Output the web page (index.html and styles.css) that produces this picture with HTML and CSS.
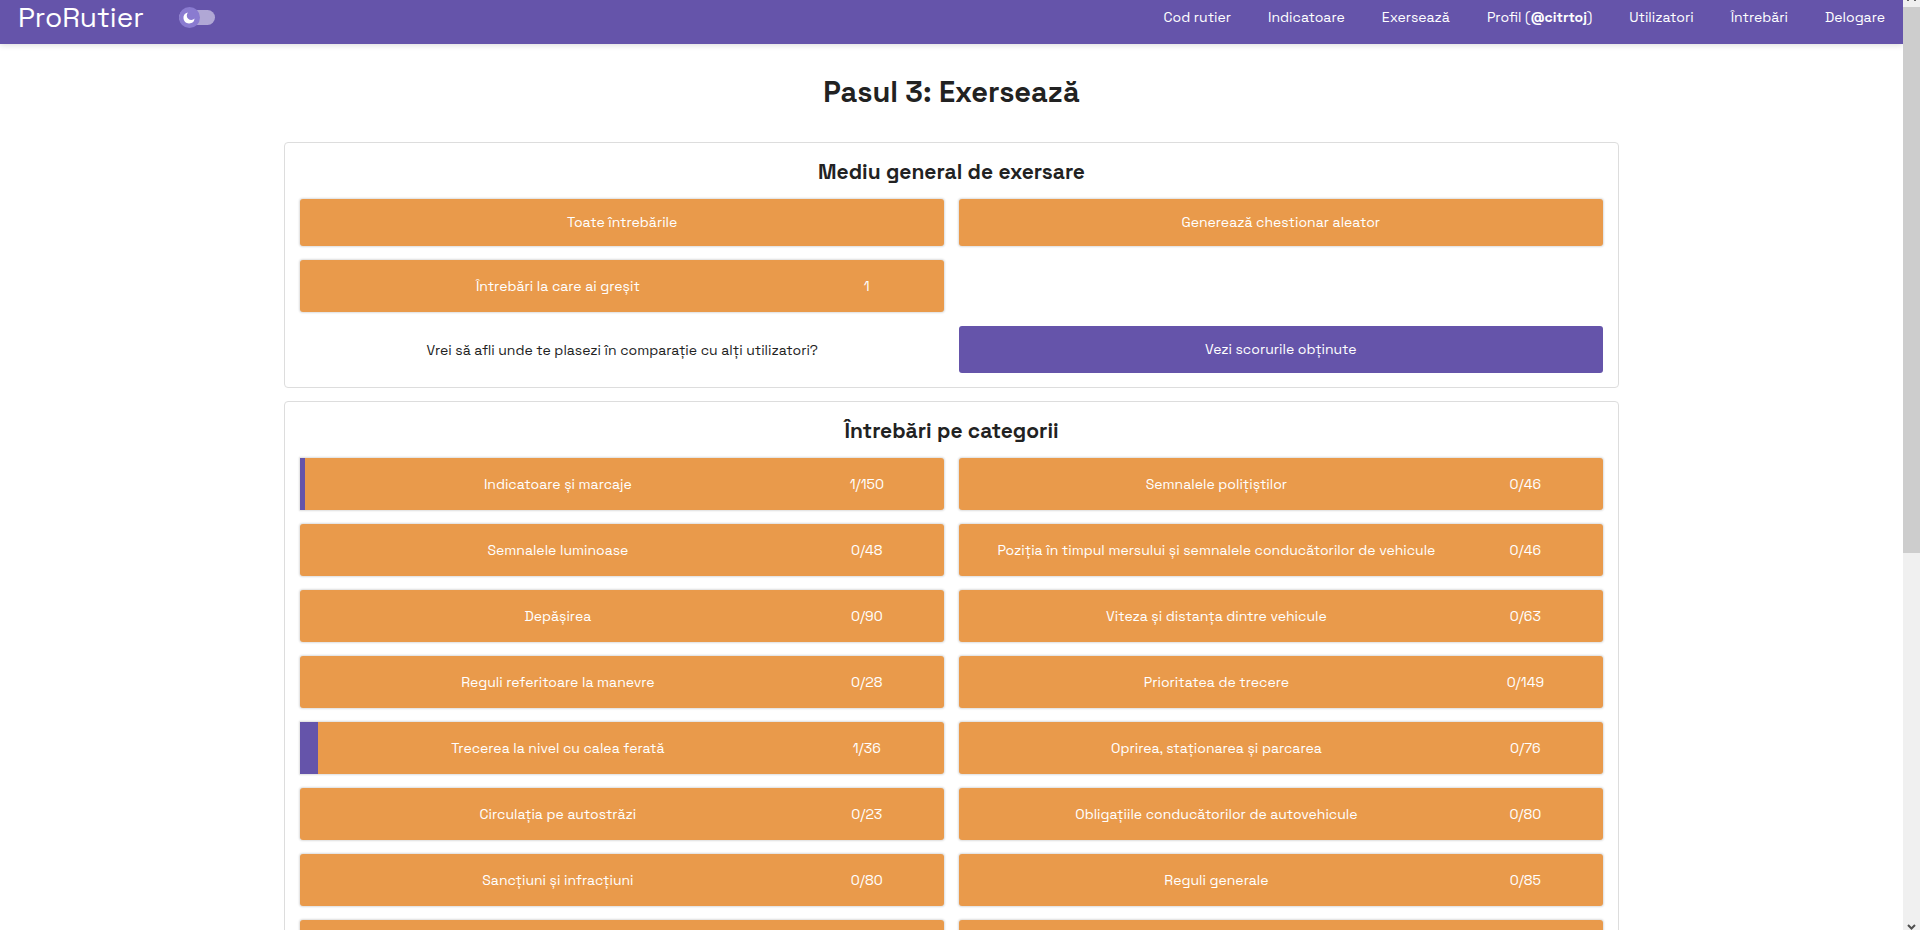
FILE: index.html
```html
<!DOCTYPE html>
<html lang="ro">
<head>
<meta charset="utf-8">
<meta name="viewport" content="width=device-width, initial-scale=1">
<title>ProRutier - Exersează</title>
<link rel="stylesheet" href="styles.css">
</head>
<body>
<div class="window">
  <div class="page">
    <header class="topbar">
      <div class="brand">
        <a class="logo" href="#">ProRutier</a>
        <label class="theme">
          <input class="theme-input" type="checkbox" aria-label="Mod întunecat">
          <span class="theme-knob">
            <svg viewBox="0 0 12 12" width="12" height="12" aria-hidden="true"><path d="M5 0.4A5.6 5.6 0 1 0 11.6 6.6A4 4 0 0 1 5 0.4Z" fill="#fff"/></svg>
          </span>
        </label>
      </div>
      <nav class="nav">
        <a href="#">Cod rutier</a>
        <a href="#">Indicatoare</a>
        <a href="#">Exersează</a>
        <a href="#">Profil (<b>@citrtoj</b>)</a>
        <a href="#">Utilizatori</a>
        <a href="#">Întrebări</a>
        <a href="#">Delogare</a>
      </nav>
    </header>
    <main class="main">
      <h1 class="title">Pasul 3: Exersează</h1>
      <section class="card">
        <h2 class="card-title">Mediu general de exersare</h2>
        <div class="grid">
          <a class="tile" href="#">Toate întrebările</a>
          <a class="tile" href="#">Generează chestionar aleator</a>
          <a class="tile tile-count" href="#"><span>Întrebări la care ai greșit</span><span>1</span></a>
          <p class="hint">Vrei să afli unde te plasezi în comparație cu alți utilizatori?</p>
          <a class="tile tile-accent" href="#">Vezi scorurile obținute</a>
        </div>
      </section>
      <section class="card">
        <h2 class="card-title">Întrebări pe categorii</h2>
        <div class="grid">
          <a class="tile tile-count tile-started" href="#"><i class="progress" style="width:0.67%"></i><span>Indicatoare și marcaje</span><span>1/150</span></a>
          <a class="tile tile-count" href="#"><span>Semnalele polițiștilor</span><span>0/46</span></a>
          <a class="tile tile-count" href="#"><span>Semnalele luminoase</span><span>0/48</span></a>
          <a class="tile tile-count" href="#"><span>Poziția în timpul mersului și semnalele conducătorilor de vehicule</span><span>0/46</span></a>
          <a class="tile tile-count" href="#"><span>Depășirea</span><span>0/90</span></a>
          <a class="tile tile-count" href="#"><span>Viteza și distanța dintre vehicule</span><span>0/63</span></a>
          <a class="tile tile-count" href="#"><span>Reguli referitoare la manevre</span><span>0/28</span></a>
          <a class="tile tile-count" href="#"><span>Prioritatea de trecere</span><span>0/149</span></a>
          <a class="tile tile-count tile-started" href="#"><i class="progress" style="width:2.7%"></i><span>Trecerea la nivel cu calea ferată</span><span>1/36</span></a>
          <a class="tile tile-count" href="#"><span>Oprirea, staționarea și parcarea</span><span>0/76</span></a>
          <a class="tile tile-count" href="#"><span>Circulația pe autostrăzi</span><span>0/23</span></a>
          <a class="tile tile-count" href="#"><span>Obligațiile conducătorilor de autovehicule</span><span>0/80</span></a>
          <a class="tile tile-count" href="#"><span>Sancțiuni și infracțiuni</span><span>0/80</span></a>
          <a class="tile tile-count" href="#"><span>Reguli generale</span><span>0/85</span></a>
          <a class="tile tile-count" href="#"></a>
          <a class="tile tile-count" href="#"></a>
        </div>
      </section>
    </main>
  </div>
  <div class="scrollbar" aria-hidden="true">
    <svg class="arrow" viewBox="0 0 17 7" width="17" height="7"><path d="M4 0V1H6V0M11 0V1H13V0" fill="#606060"/></svg>
    <div class="scroll-thumb"></div>
    <svg class="arrow" viewBox="0 0 17 6" width="17" height="6"><path d="M5 1L8.5 4.5L12 1" fill="none" stroke="#505050" stroke-width="2"/></svg>
  </div>
</div>
</body>
</html>
```
FILE: styles.css
```css
* { box-sizing: border-box; }

body {
  margin: 0;
  background: #fff;
  color: #222;
  font-family: "Space Grotesk", Inter, "Liberation Sans", sans-serif;
  font-size: 14px;
  line-height: 20px;
}

a { color: inherit; text-decoration: none; }

.window { display: flex; height: 100vh; overflow: hidden; }
.page { flex: 1; min-width: 0; }

.topbar {
  display: flex;
  justify-content: space-between;
  align-items: center;
  padding: 0 18px 9px;
  background: #6554aa;
  color: #fff;
  box-shadow: 0 1px 6px rgba(0, 0, 0, 0.15);
}

.brand { display: flex; align-items: center; gap: 35px; }
.logo { font-size: 28px; line-height: 35px; font-weight: 400; }

.theme { position: relative; display: flex; width: 36px; cursor: pointer; }
.theme-input {
  appearance: none;
  width: 36px;
  height: 15px;
  margin: 0;
  border-radius: 8px;
  background: #b0a7d5;
}
.theme-knob {
  position: absolute;
  left: 0;
  top: -3px;
  display: grid;
  place-items: center;
  width: 21px;
  height: 21px;
  border-radius: 50%;
  background: #8a7bd0;
}

.nav { display: flex; gap: 37px; padding-bottom: 2px; }

.main { width: 70%; margin: 0 auto; }

.title {
  margin: 0;
  padding: 30px 0 32px;
  font-size: 29px;
  line-height: 36px;
  text-align: center;
}

.card {
  margin: 0 -1px 13px;
  padding: 14px 15px;
  border: 1px solid #ddd;
  border-radius: 4px;
}
.card-title {
  margin: 0 0 12px;
  font-size: 21px;
  line-height: 30px;
  text-align: center;
}

.grid { display: grid; grid-template-columns: 1fr 1fr; gap: 14px 15px; }

.tile {
  position: relative;
  display: block;
  padding: 13px 0 14px;
  border-radius: 3px;
  background: #e99a4b;
  color: #fff;
  text-align: center;
  box-shadow: 0 0 2px 1px #ddd;
}
.tile-count {
  display: grid;
  grid-template-columns: 80% 16%;
  min-height: 52px;
  padding: 16px 0;
}
.tile-started { border-radius: 0 3px 3px 0; }
.tile-accent { background: #6554aa; box-shadow: none; }
.progress { position: absolute; left: 0; top: 0; height: 100%; background: #6554aa; }

.hint { grid-column: 1; margin: 0; align-self: center; text-align: center; }

.scrollbar {
  display: flex;
  flex-direction: column;
  width: 17px;
  background: #f0f0f0;
}
.scroll-thumb { height: 58.7%; background: #cdcdcd; }
.arrow { display: block; }
.arrow:last-child { margin-top: auto; }
```
